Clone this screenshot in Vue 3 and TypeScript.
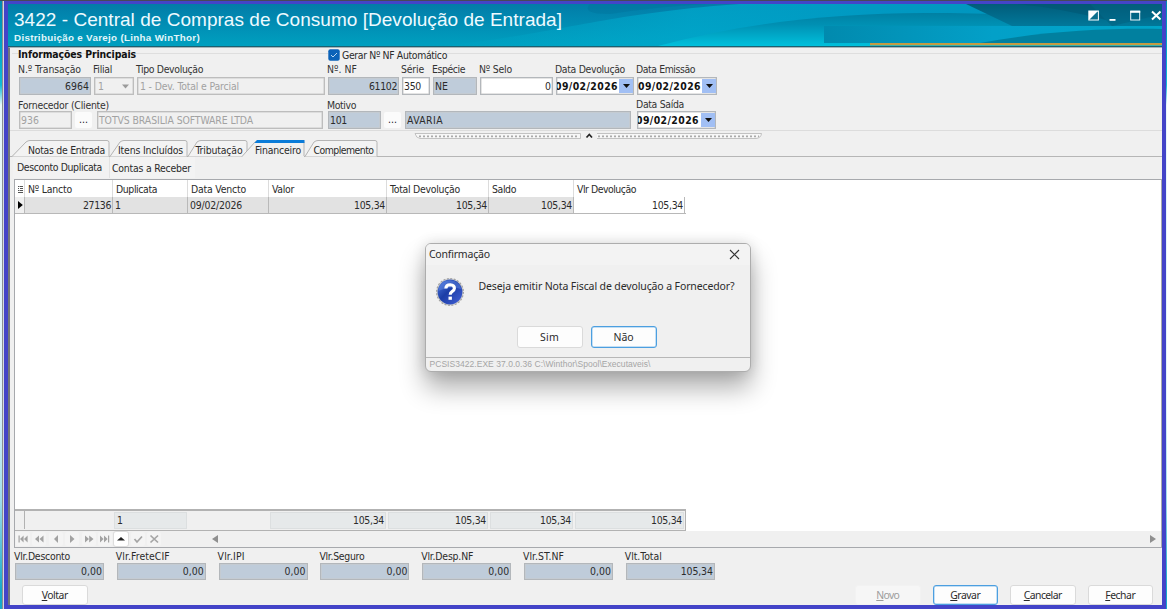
<script setup lang="ts">
import type { Directive } from 'vue'

/* Tracks a label so that it fills exactly the given number of pixels. */
const vFit: Directive<HTMLElement, number> = {
  mounted(el, binding) {
    const count = (el.textContent ?? '').length
    const natural = el.getBoundingClientRect().width
    if (count > 0 && natural > 0) el.style.letterSpacing = `${(binding.value - natural) / count}px`
  },
}

interface Txt { t: string; w: number }
const labels: Txt[] = [
  { t: 'N.º Transação', w: 63 }, { t: 'Filial', w: 19 }, { t: 'Tipo Devolução', w: 67 },
  { t: 'Nº. NF', w: 30 }, { t: 'Série', w: 23 }, { t: 'Espécie', w: 33 }, { t: 'Nº Selo', w: 33 },
  { t: 'Data Devolução', w: 70 }, { t: 'Data Emissão', w: 59 },
]

/* slope: width of the slanted edge; lap: how far it reaches over the tab before it */
interface Tab { t: string; w: number; box: number; pad: number; slope: number; lap: number; active?: boolean }
const tabs: Tab[] = [
  { t: 'Notas de Entrada', w: 77, box: 98, pad: 16, slope: 14, lap: 0 },
  { t: 'Itens Incluídos', w: 65, box: 78, pad: 8, slope: 10, lap: 0 },
  { t: 'Tributação', w: 47, box: 60, pad: 7.5, slope: 9, lap: 0 },
  { t: 'Financeiro', w: 46, box: 57, pad: 7, slope: 13, lap: 6, active: true },
  { t: 'Complemento', w: 60, box: 73, pad: 8.5, slope: 9, lap: 0 },
]

interface Col { t: string; w: number; v: string; vw: number; right: boolean; sum: string; sw: number }
const cols: Col[] = [
  { t: 'Nº Lancto', w: 44, v: '27136', vw: 28, right: true, sum: '', sw: 0 },
  { t: 'Duplicata', w: 41, v: '1', vw: 6, right: false, sum: '1', sw: 6 },
  { t: 'Data Vencto', w: 55, v: '09/02/2026', vw: 52, right: false, sum: '', sw: 0 },
  { t: 'Valor', w: 22, v: '105,34', vw: 31, right: true, sum: '105,34', sw: 31 },
  { t: 'Total Devolução', w: 70, v: '105,34', vw: 31, right: true, sum: '105,34', sw: 31 },
  { t: 'Saldo', w: 24, v: '105,34', vw: 31, right: true, sum: '105,34', sw: 31 },
  { t: 'Vlr Devolução', w: 59, v: '105,34', vw: 31, right: true, sum: '105,34', sw: 31 },
]

interface Total { t: string; w: number; v: string; vw: number }
const totals: Total[] = [
  { t: 'Vlr.Desconto', w: 56, v: '0,00', vw: 21 },
  { t: 'Vlr.FreteCIF', w: 54, v: '0,00', vw: 21 },
  { t: 'Vlr.IPI', w: 27, v: '0,00', vw: 21 },
  { t: 'Vlr.Seguro', w: 45, v: '0,00', vw: 21 },
  { t: 'Vlr.Desp.NF', w: 52, v: '0,00', vw: 21 },
  { t: 'Vlr.ST.NF', w: 41, v: '0,00', vw: 21 },
  { t: 'Vlt.Total', w: 37, v: '105,34', vw: 32 },
]

const navIcons: string[] = [
  'M.5 1.500h1.200v7H.5zM5.600 1.500v7L2 5zM9.600 1.500v7L6 5z',
  'M5 1.500v7L1 5zM9.500 1.500v7L5.500 5z',
  'M7 1v8L3 5z',
  'M3 1v8l4.500-4z',
  'M1 1.500v7L5 5zM5.200 1.500v7L9.500 5z',
  'M0 1.500v7L3.600 5zM4 1.500v7L7.600 5zM8 1.500h1.200v7H8z',
]

interface Btn { k: string; rest: string; w: number; kind: string }
const actions: Btn[] = [
  { k: 'N', rest: 'ovo', w: 23, kind: 'off' },
  { k: 'G', rest: 'ravar', w: 30, kind: 'focus' },
  { k: 'C', rest: 'ancelar', w: 38, kind: '' },
  { k: 'F', rest: 'echar', w: 30, kind: '' },
]
</script>

<template>
  <div class="desktop">
    <div class="window">
      <header class="banner">
        <svg class="waves" width="1154" height="42" viewBox="8 4 1154 42" preserveAspectRatio="none">
          <defs>
            <linearGradient id="base" x1="0" y1="0" x2="0" y2="1">
              <stop offset="0" stop-color="#027ca8" /><stop offset="1" stop-color="#00a0c0" />
            </linearGradient>
            <linearGradient id="glow" x1="0" y1="0" x2="1" y2="0">
              <stop offset="0" stop-color="#00b0d0" stop-opacity="0" /><stop offset=".35" stop-color="#00a8cc" stop-opacity=".75" /><stop offset=".6" stop-color="#0099c2" /><stop offset="1" stop-color="#0092ba" />
            </linearGradient>
            <linearGradient id="deep" x1="0" y1="0" x2="0" y2="1">
              <stop offset="0" stop-color="#0080a3" /><stop offset=".35" stop-color="#0090b3" /><stop offset="1" stop-color="#00c0dc" />
            </linearGradient>
            <linearGradient id="low" x1="0" y1="0" x2="1" y2="0">
              <stop offset="0" stop-color="#018aae" /><stop offset=".5" stop-color="#03a0c8" /><stop offset="1" stop-color="#00a4c8" />
            </linearGradient>
            <linearGradient id="corner" x1="0" y1="0" x2="0" y2="1">
              <stop offset="0" stop-color="#015c7a" /><stop offset="1" stop-color="#01789a" />
            </linearGradient>
          </defs>
          <rect x="8" y="4" width="1154" height="42" fill="url(#base)" />
          <path d="M440 46C560 34 600 14 740 4H1162V46z" fill="url(#glow)" />
          <path d="M590 4H705Q655 7 610 14Q580 14 590 4z" fill="#016f99" opacity=".35" />
          <path d="M658 46C740 24 830 13 925 13C1010 13 1080 17 1162 26V46z" fill="url(#deep)" />
          <path d="M966 4H1162V26H1012z" fill="url(#corner)" />
          <path d="M1018 4H1090L1106 20Q1060 8 1018 4z" fill="#015470" opacity=".5" />
          <path d="M1090 4H1162V14L1112 26z" fill="#01607e" opacity=".5" />
          <rect x="787" y="26" width="375" height="17" fill="none" />
          <rect x="824" y="26" width="338" height="17" fill="url(#low)" />
          <path d="M980 43C1040 32 1100 28 1162 29V43z" fill="#01809f" />
          <rect x="870" y="43" width="292" height="2.300" fill="#c49b43" />
        </svg>
        <div class="titles">
          <div class="title"><span v-fit="548">3422 - Central de Compras de Consumo [Devolução de Entrada]</span></div>
          <div class="subtitle"><span v-fit="186">Distribuição e Varejo (Linha WinThor)</span></div>
        </div>
        <svg class="controls" width="76" height="12" viewBox="0 0 76 12">
          <rect x=".8" y="1" width="9.600" height="9" fill="#0b6e8c" stroke="#fff" stroke-width="1" />
          <path d="M1 1h9L1 10z" fill="#fff" />
          <rect x="21.500" y="9" width="6" height="1.800" fill="#fff" />
          <rect x="42.700" y="1.400" width="9" height="8.600" fill="none" stroke="#e9f6fa" stroke-width="1" />
          <rect x="42.200" y=".6" width="10" height="2.200" fill="#fff" />
          <path d="M64 1.500l8.500 8M72.500 1.500l-8.500 8" stroke="#fff" stroke-width="2" />
        </svg>
      </header>

      <main class="body">
        <section class="info">
          <div class="legend">
            <span class="legend-name"><b v-fit="118">Informações Principais</b></span>
            <span class="check">
              <svg width="12" height="12" viewBox="0 0 12 12"><rect x=".3" y=".3" width="11.400" height="11.400" rx="2" fill="#0b62b8" /><path d="M3 6l2 2 4-4" fill="none" stroke="#b9d7f2" stroke-width="1" /></svg>
              <span v-fit="105">Gerar Nº NF Automático</span>
            </span>
          </div>
          <div class="grid-a caption">
            <div v-for="l in labels" :key="l.t"><span v-fit="l.w">{{ l.t }}</span></div>
          </div>
          <div class="grid-a">
            <div class="field blue right"><span v-fit="24">6964</span></div>
            <div class="field gray split"><span>1</span><svg width="7" height="5" viewBox="0 0 7 5"><path d="M0 .5h7L3.500 4.500z" fill="#9b9b9b" /></svg></div>
            <div class="field gray"><span v-fit="99">1 - Dev. Total e Parcial</span></div>
            <div class="field blue right"><span v-fit="28">61102</span></div>
            <div class="field near"><span v-fit="17">350</span></div>
            <div class="field blue near"><span v-fit="13">NE</span></div>
            <div class="field right"><span>0</span></div>
            <div v-for="n in 2" :key="n" class="field date" :class="{ cut: n === 1 }">
              <span class="clip"><b v-fit="63">09/02/2026</b></span>
              <i class="drop"><svg width="7" height="4" viewBox="0 0 7 4"><path d="M0 0h7L3.500 4z" fill="#111" /></svg></i>
            </div>
          </div>
          <div class="caption second">
            <span class="c1"><span v-fit="91">Fornecedor (Cliente)</span></span>
            <span class="c2"><span v-fit="29">Motivo</span></span>
            <span class="c3"><span v-fit="48">Data Saída</span></span>
          </div>
          <div class="grid-b">
            <div class="field gray near"><span v-fit="18">936</span></div>
            <div class="dots">...</div>
            <div class="field gray near b2"><span v-fit="154">TOTVS BRASILIA SOFTWARE LTDA</span></div>
            <div class="field blue near b3"><span v-fit="17">101</span></div>
            <div class="dots">...</div>
            <div class="field blue near b4"><span v-fit="36">AVARIA</span></div>
            <div class="field date cut b5">
              <span class="clip"><b v-fit="63">09/02/2026</b></span>
              <i class="drop"><svg width="7" height="4" viewBox="0 0 7 4"><path d="M0 0h7L3.500 4z" fill="#111" /></svg></i>
            </div>
          </div>
        </section>

        <div class="splitter">
          <svg width="350" height="8" viewBox="0 0 350 8">
            <path d="M2 1.500H167.500V6.500H7Q3 6 2 1.500z" fill="#f7f7f7" stroke="#b5b5b5" stroke-width=".8" />
            <path d="M184 6.500H343Q348 6 348.500 1.500H184" fill="#f7f7f7" stroke="#b5b5b5" stroke-width=".8" />
            <path d="M6 4.300H166M185 4.300H346" stroke="#aaa" stroke-width="1.800" stroke-dasharray="2 2" />
            <path d="M173.500 5.500L176.300 2.500L179 5.500" fill="none" stroke="#222" stroke-width="1.700" />
          </svg>
        </div>

        <nav class="tabs">
          <div v-for="tab in tabs" :key="tab.t" class="tab" :style="{ width: tab.box + 'px' }">
            <svg class="tab-shape" :width="tab.box" height="18" :viewBox="`0 0 ${tab.box} 18`">
              <path :d="`M${-tab.lap} 17.500L${tab.slope - tab.lap} 3Q${tab.slope - tab.lap + 2} 1.500 ${tab.slope - tab.lap + 4} 1.500H${tab.box - 3}Q${tab.box - 1} 1.500 ${tab.box - 1} 3.500V17.500`" :fill="tab.active ? '#f0f0f0' : '#f3f3f3'" stroke="#b4b4b4" stroke-width="1" />
              <path v-if="tab.active" :d="`M${tab.slope - tab.lap - .5} 4L${tab.slope - tab.lap + 2} 1H${tab.box - .5}V4z`" fill="#0a7bd8" />
              <path v-if="tab.active" :d="`M${-tab.lap + 1} 17.500H${tab.box - 1}`" stroke="#f0f0f0" />
            </svg>
            <span class="tab-text" :style="{ paddingLeft: tab.pad + 'px' }"><span v-fit="tab.w">{{ tab.t }}</span></span>
          </div>
        </nav>

        <div class="subtabs">
          <span class="sub on"><span v-fit="85">Desconto Duplicata</span></span>
          <span class="sub"><span v-fit="79">Contas a Receber</span></span>
        </div>

        <section class="table">
          <div class="columns head">
            <div class="mark"><svg width="8" height="9" viewBox="0 0 8 9"><path d="M2 1.500h1.500M4 1.500h3M2 3.500h1M4 3.500h3M2 5.500h1.500M4 5.500h3M2 7.500h5" stroke="#555" stroke-width="1" /></svg></div>
            <div v-for="c in cols" :key="c.t"><span v-fit="c.w">{{ c.t }}</span></div>
          </div>
          <div class="columns line">
            <div class="mark"><svg width="6" height="8" viewBox="0 0 6 8"><path d="M1 0v8L5.800 4z" fill="#000" /></svg></div>
            <div v-for="c in cols" :key="c.t" :class="{ right: c.right }"><span v-fit="c.vw">{{ c.v }}</span></div>
          </div>
          <div class="void"></div>
          <div class="columns foot">
            <div class="mark"></div>
            <div v-for="c in cols" :key="c.t" :class="{ right: c.right, sum: c.sum }"><span v-if="c.sum" v-fit="c.sw">{{ c.sum }}</span></div>
          </div>
          <div class="navigator">
            <span v-for="(d, i) in navIcons" :key="i" class="nav"><svg width="10" height="10" viewBox="0 0 10 10"><path :d="d" fill="#a2a2a2" /></svg></span>
            <span class="nav live"><svg width="10" height="10" viewBox="0 0 10 10"><path d="M1 6.500h8L5 3z" fill="#222" /></svg></span>
            <span class="nav"><svg width="10" height="10" viewBox="0 0 10 10"><path d="M1.500 5l2.500 3 5-5.500" fill="none" stroke="#a5a5a5" stroke-width="1.700" /></svg></span>
            <span class="nav"><svg width="10" height="10" viewBox="0 0 10 10"><path d="M1.500 1.500l7.500 7M9 1.500l-7.500 7" fill="none" stroke="#a5a5a5" stroke-width="1.700" /></svg></span>
            <svg class="sleft" width="6" height="8" viewBox="0 0 6 8"><path d="M6 0v8L0 4z" fill="#8f8f8f" /></svg>
            <svg class="sright" width="6" height="8" viewBox="0 0 6 8"><path d="M0 0v8L6 4z" fill="#8f8f8f" /></svg>
          </div>
        </section>

        <section class="totals">
          <div v-for="t in totals" :key="t.t" class="total">
            <div class="total-name"><span v-fit="t.w">{{ t.t }}</span></div>
            <div class="field blue right"><span v-fit="t.vw">{{ t.v }}</span></div>
          </div>
        </section>

        <footer class="actions">
          <div class="btn back"><span v-fit="26"><u>V</u>oltar</span></div>
          <div v-for="b in actions" :key="b.k" class="btn" :class="b.kind"><span v-fit="b.w"><u>{{ b.k }}</u>{{ b.rest }}</span></div>
        </footer>
      </main>
    </div>

    <div class="dialog">
      <div class="dialog-bar">
        <span v-fit="61">Confirmação</span>
        <svg width="11" height="11" viewBox="0 0 11 11"><path d="M1 1l9 9M10 1l-9 9" stroke="#333" stroke-width="1.100" /></svg>
      </div>
      <div class="dialog-main">
        <svg width="30" height="30" viewBox="0 0 30 30">
          <defs>
            <linearGradient id="ball" x1="0" y1="0" x2="1" y2="1"><stop offset="0" stop-color="#4f7be0" /><stop offset=".45" stop-color="#1b3da6" /><stop offset="1" stop-color="#4461d8" /></linearGradient>
          </defs>
          <circle cx="15" cy="15" r="13.400" fill="#d0d0d0" stroke="#a3a3a3" stroke-width="1.200" stroke-dasharray="2 1.500" />
          <circle cx="15" cy="15" r="12.400" fill="url(#ball)" />
          <path d="M3.500 14Q4 4 15 3.200Q25 4 26 12Q16 8 3.500 14z" fill="#6f95ee" opacity=".4" />
          <path d="M10.800 11.500Q11 7.800 15.200 7.800Q19.500 8 19.400 11.300Q19.300 13.200 17 14.600Q15.200 15.800 15.200 17.800" fill="none" stroke="#fff" stroke-width="3.100" />
          <rect x="13.500" y="19.600" width="3.400" height="3.200" fill="#fff" />
        </svg>
        <p><span v-fit="256">Deseja emitir Nota Fiscal de devolução a Fornecedor?</span></p>
      </div>
      <div class="dialog-buttons">
        <div class="btn"><span v-fit="19">Sim</span></div>
        <div class="btn focus"><span v-fit="20">Não</span></div>
      </div>
      <div class="dialog-status"><span v-fit="221">PCSIS3422.EXE 37.0.0.36 C:\Winthor\Spool\Executaveis\</span></div>
    </div>
  </div>
</template>

<style>
html, body { margin: 0; overflow: hidden; background: #fff; }
</style>

<style scoped>
* { box-sizing: border-box; }
.desktop { position: relative; width: 1167px; height: 609px; padding-left: 4px; overflow: hidden;
  background: linear-gradient(90deg, transparent 2px, #8b8f92 2px, #8b8f92 3px, #d7dbe0 3px, #d7dbe0 4px, transparent 4px),
    linear-gradient(180deg, #0089b0, #00a6c6 45px, #10bcd8 85px, #e8f8fb 105px, #dff3fa 400px, #9fdcec 500px, #16a9cb 590px);
  font: 10.400px/12px 'DejaVu Sans Condensed', 'DejaVu Sans', sans-serif; font-stretch: condensed; color: #2b2b2b; white-space: nowrap; }
span, b { display: inline-block; white-space: pre; }
.window { width: 1162px; height: 609px; border: 4px solid #4344c8; background: #f0f0f0; display: flex; flex-direction: column; }
.desktop::before { content: ''; position: absolute; left: 0; top: 0; width: 1167px; height: 1.300px; background: #454b58; }
.banner { position: relative; height: 43px; flex: none; overflow: hidden; border-bottom: 1px solid #1b6071; }
.waves { position: absolute; left: 0; top: 0; display: block; }
.titles { position: relative; padding-left: 6px; color: #fff; font-family: 'Liberation Sans', Arial, sans-serif; font-stretch: normal; }
.title { font-size: 19px; line-height: 22px; padding-top: 5px; height: 27px; color: #eefaff; }
.subtitle { font-size: 9.800px; line-height: 13px; font-weight: bold; color: #e2f6fa; }
.controls { position: absolute; right: -2px; top: 6px; }
.body { flex: 1; display: flex; flex-direction: column; border-left: 2px solid #73777c; border-top: 1px solid #a9b5b9; min-height: 0; }

.info { height: 83px; border-bottom: 1px solid #dcdcdc; padding-left: 9px; flex: none; }
.legend { height: 14px; display: flex; align-items: center; position: relative;
  background: linear-gradient(#dedede, #dedede) 0 5px / 100% 1px no-repeat; margin-left: -7px; padding-left: 6px; }
.legend span { background: #f0f0f0; }
.legend-name { width: 310px; background: none !important; margin-top: -2px; color: #111; }
.check { display: flex; align-items: center; gap: 2px; margin-top: -1px; }
.grid-a { display: grid; grid-template-columns: 72px 40px 188px 71px 28px 44px 73px 78px 80px; column-gap: 3px; }
.caption { height: 15px; align-items: center; color: #333; }
.grid-a.caption > div { margin: -2px 0 0 -1px; }
.field { height: 18px; border: 1px solid #b3b7bb; box-shadow: inset 0 0 0 .5px #c9c9c9; background: #fff; line-height: 16px; padding: 0 2px; overflow: hidden; }
.blue { background: #bfccda; }
.gray { background: #f0f0f0; color: #a2a2a2; border-color: #bdbdbd; }
.field.near { padding-left: 1px; }
.right { text-align: right; }
.field.right { padding-right: 1px; }
.split { display: flex; justify-content: space-between; align-items: center; padding: 0 4px 0 3px; }
.date { display: flex; padding: 0; }
.date b { color: #111; }
.clip { flex: 1; overflow: hidden; height: 16px; }
.cut b { margin-left: -2px; }
.drop { width: 14px; background: #a1bff4; display: flex; align-items: center; justify-content: center; margin: 1px 0; }
.second { display: grid; grid-template-columns: 309px 309px 100px; margin: 4px 0 0 -1px; height: 12px; }
.c3 { margin-top: -2px; }
.grid-b { display: grid; grid-template-columns: 53px 17px 226px 53px 17px 227px 79px; column-gap: 3px; }
.b2 { margin-left: 2px; margin-right: -2px; }
.b3 { margin-left: 4px; margin-right: -4px; }
.b3 + .dots { margin-left: 4px; margin-right: -4px; }
.b4 { margin-left: 5px; margin-right: -4px; }
.b5 { margin-left: 7px; margin-right: -7px; }
.dots { background: #fbfbfb; border-radius: 2px; height: 16px; margin-top: 1px; text-align: center; line-height: 14px; color: #222; }

.splitter { height: 8px; padding-left: 403px; flex: none; margin-top: 1px; }
.splitter svg { display: block; }

.tabs { height: 17px; display: flex; flex: none; padding-left: 2px; border-bottom: 1px solid #b6b6b6; }
.tab { position: relative; flex: none; }
.tab-shape { position: absolute; left: 0; top: -1px; overflow: visible; }
.tab-text { position: relative; padding-top: 4px; }
.subtabs { height: 22px; flex: none; display: flex; padding-left: 3px; }
.sub { height: 21px; padding: 5px 4px 0 2px; margin-top: 0; }
.sub.on { padding: 4px 7px 0 4px; border-right: 1px solid #e2e2e2; background: #f2f2f2; }
.sub:not(.on) { background: #f3f3f3; }

.table { flex: none; height: 369px; margin-left: 4px; border: 1px solid #a7a9ad; background: #fff; display: flex; flex-direction: column; }
.columns { display: grid; grid-template-columns: 10px 88px 75px 81px 118px 102px 85px 111px; flex: none; width: 671px; }
.columns > div { border-right: 1px solid #dcdcdc; padding: 0 1px 0 2px; }
.mark { display: flex; align-items: center; justify-content: center; padding: 0 !important; }
.head { height: 17px; line-height: 18px; }
.head > div { padding-left: 3px; }
.head > div:last-child { border-color: transparent; }
.line { height: 17px; line-height: 16px; grid-template-rows: 16px; border-bottom: 1px solid #b8b8b8; }
.line > div { background: #e2e2e2; border-color: #b9b9b9; }
.line > div:last-child { background: #fff; }
.line > .mark:first-child { background: #f0f0f0; }
.void { flex: 1; }
.foot { height: 22px; background: #f0f0f0; border: 1px solid #b2b2b2; border-width: 2px 1px 1px 0; line-height: 14px; padding-bottom: 1px; grid-template-rows: 18px; }
.foot > div { border: 0; }
.foot > .mark { border-right: 1px solid #b2b2b2; }
.foot > .sum { background: #e6e9ea; border: 1px solid #dcdfe0; margin: 1px 1px 0 1px; }
.navigator { height: 16px; flex: none; background: #f0f0f0; display: flex; align-items: center; padding-right: 5px; }
.nav { width: 14px; height: 14px; margin-right: 2.400px; background: #f4f4f4; border-radius: 2px; display: flex; align-items: center; justify-content: center; flex: none; }
.nav:first-child { margin-left: 1px; }
.live { background: #fff; box-shadow: 0 0 0 1px #ddd; }
.sleft { margin-left: 48px; }
.sright { margin-left: auto; }

.totals { display: flex; gap: 12.800px; margin: 2px 0 0 5px; flex: none; }
.total { width: 89px; }
.total-name { height: 13px; margin: 0 0 0 -1px; line-height: 12px; }
.totals .field { height: 17px; line-height: 14px; }
.actions { display: flex; gap: 12px; margin-top: 5px; padding: 0 9px 0 12px; font-family: 'Noto Sans', 'Open Sans', sans-serif; font-stretch: normal; flex: none; }
.btn { width: 65.500px; height: 20px; line-height: 18px; border: 1px solid #dadada; border-radius: 3px; background: #fdfdfd; text-align: center; }
.btn.back { margin-right: auto; }
.btn.off { background: #f6f6f6; border-color: #f2f2f2; color: #9c9c9c; }
.btn.focus { border: 1px solid #4c9fe0; box-shadow: inset 0 0 0 .5px #8cc2ec; }

.dialog { position: absolute; left: 424.500px; top: 242.500px; width: 326px; height: 129.500px; border: 1px solid #adadad; border-radius: 6px; background: #f0f0f0;
  display: flex; flex-direction: column; font-family: 'Noto Sans', 'Open Sans', sans-serif; font-stretch: normal;
  box-shadow: 0 16px 26px rgba(0,0,0,.32), 0 0 14px rgba(0,0,0,.13); }
.dialog-bar { height: 22px; background: #f3f3f3; border-radius: 5px 5px 0 0; display: flex; align-items: center; justify-content: space-between; padding: 0 10px 0 3.400px; font-size: 10.500px; }
.dialog-main { height: 61px; display: flex; padding: 12px 0 0 9.500px; }
.dialog-main p { margin: 3px 0 0 13.500px; font-size: 10.500px; }
.dialog-buttons { display: flex; gap: 8px; padding-left: 91px; height: 31px; }
.dialog-buttons .btn { width: 66px; height: 22px; line-height: 20px; font-size: 10.500px; }
.dialog-status { flex: 1; border-top: 1px solid #b7b7b7; font: 8.500px/13px 'Liberation Sans', Arial, sans-serif; color: #a5a5a5; padding-left: 4px; }
</style>
